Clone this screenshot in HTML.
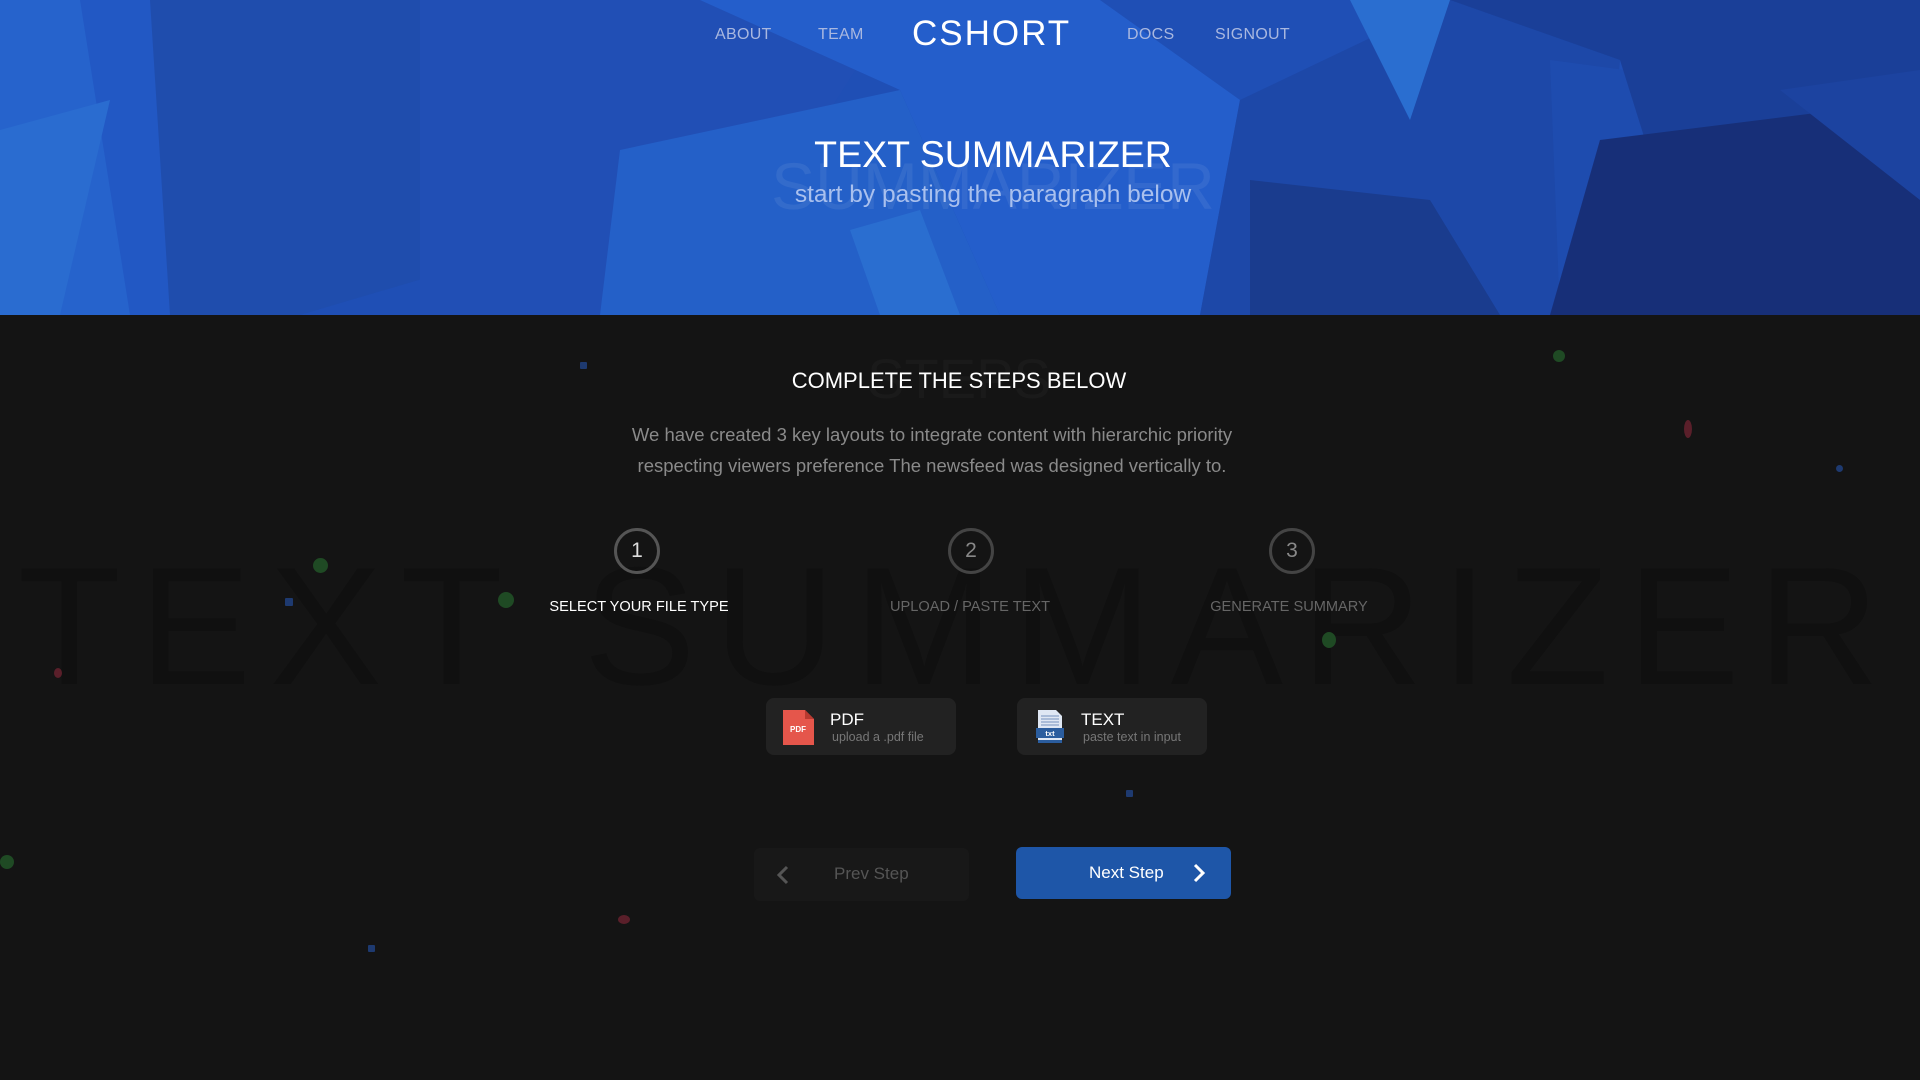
<!DOCTYPE html>
<html><head><meta charset="utf-8"><style>
*{margin:0;padding:0;box-sizing:border-box}
body{width:1920px;height:1080px;overflow:hidden;background:#141414;font-family:"Liberation Sans",sans-serif;position:relative}
.hdr{position:absolute;left:0;top:0;width:1920px;height:315px;overflow:hidden;background:#1f4fb5}
.abs{position:absolute;white-space:nowrap}
.nav{color:#a9b8e0;font-size:16px;top:26px;letter-spacing:.3px}
.c{transform:translateX(-50%);text-align:center}
.card{position:absolute;background:#222;border-radius:8px;width:190px;height:57px}
.card .t{position:absolute;left:64px;top:12px;color:#fff;font-size:17px}
.card .s{position:absolute;left:66px;top:32px;color:#777;font-size:12.5px}
.circ{position:absolute;width:46px;height:46px;border:3px solid #444;border-radius:50%;color:#888;font-size:21px;text-align:center;line-height:40px;transform:translate(-50%,-50%)}
.lbl{font-size:14.6px;color:#666;top:599px}
.dot{position:absolute;border-radius:50%}
</style></head><body>
<div class="hdr">
<svg width="1920" height="315" style="position:absolute;left:0;top:0">
<polygon points="0,0 420,0 300,315 0,315" fill="#2258c4"/>
<polygon points="0,0 80,0 130,315 0,315" fill="#2663cc"/>
<polygon points="0,130 110,100 60,315 0,315" fill="#2a6cd0"/>
<polygon points="150,0 420,0 520,250 300,315 170,315" fill="#1f4dad"/>
<polygon points="420,0 900,0 760,220 600,315 420,315" fill="#214fb5"/>
<polygon points="620,150 900,90 1000,315 600,315" fill="#2460c8"/>
<polygon points="850,230 920,210 960,315 880,315" fill="#2a6ed0"/>
<polygon points="700,0 1100,0 1240,100 1200,315 1000,315 900,90" fill="#245ecb"/>
<polygon points="1240,100 1450,0 1620,60 1600,315 1200,315" fill="#1d48a8"/>
<polygon points="1350,0 1450,0 1410,120" fill="#2a6ed0"/>
<polygon points="1550,60 1700,80 1740,315 1560,315" fill="#1e4caf"/>
<polygon points="1450,0 1920,0 1920,315 1700,315 1620,60" fill="#1a3f98"/>
<polygon points="1600,140 1920,100 1920,315 1550,315" fill="#172f78"/>
<polygon points="1780,90 1920,70 1920,200" fill="#1c43a0"/>
<polygon points="1250,180 1430,200 1500,315 1250,315" fill="#1a3c8e"/>
</svg>
<div class="abs nav" style="left:715px">ABOUT</div>
<div class="abs nav" style="left:818px">TEAM</div>
<div class="abs" style="left:912px;top:14px;color:#fff;font-size:35px;letter-spacing:2px">CSHORT</div>
<div class="abs nav" style="left:1127px">DOCS</div>
<div class="abs nav" style="left:1215px">SIGNOUT</div>
<div class="abs c" style="left:993px;top:148px;font-size:66px;color:rgba(255,255,255,.07)">SUMMARIZER</div>
<div class="abs c" style="left:993px;top:133px;font-size:37.5px;color:#fff">TEXT SUMMARIZER</div>
<div class="abs c" style="left:993px;top:181px;font-size:24.5px;color:#a9c0ee">start by pasting the paragraph below</div>
</div>
<div class="abs" style="left:18px;top:530px;font-size:168px;color:#101010;letter-spacing:18.5px">TEXT SUMMARIZER</div>
<div class="abs c" style="left:959px;top:346px;font-size:56px;color:#1a1a1a">STEPS</div>
<div class="abs c" style="left:959px;top:368px;font-size:22px;color:#fff">COMPLETE THE STEPS BELOW</div>
<div class="abs c" style="left:932px;top:419px;font-size:18.5px;color:#8a8a8a;line-height:31px">We have created 3 key layouts to integrate content with hierarchic priority<br>respecting viewers preference The newsfeed was designed vertically to.</div>
<div class="circ" style="left:637px;top:551px;color:#ddd;border-color:#555">1</div>
<div class="circ" style="left:971px;top:551px">2</div>
<div class="circ" style="left:1292px;top:551px">3</div>
<div class="abs c lbl" style="left:639px;color:#fff">SELECT YOUR FILE TYPE</div>
<div class="abs c lbl" style="left:970px">UPLOAD / PASTE TEXT</div>
<div class="abs c lbl" style="left:1289px">GENERATE SUMMARY</div>
<div class="card" style="left:766px;top:698px">
<svg style="position:absolute;left:17px;top:12px" width="31" height="35"><polygon points="0,0 22,0 31,9 31,35 0,35" fill="#e5564b"/><polygon points="22,0 31,9 22,9" fill="#b83a30"/><text x="15" y="22" font-size="8" font-weight="bold" fill="#fff" text-anchor="middle" font-family="Liberation Sans">PDF</text></svg>
<div class="t">PDF</div><div class="s">upload a .pdf file</div></div>
<div class="card" style="left:1017px;top:698px">
<svg style="position:absolute;left:19px;top:12px" width="28" height="35"><polygon points="2,0 20,0 26,6 26,33 2,33" fill="#dfe7f3"/><g stroke="#8aa3c8" stroke-width="1.3"><line x1="5" y1="6" x2="23" y2="6"/><line x1="5" y1="9" x2="23" y2="9"/><line x1="5" y1="12" x2="23" y2="12"/><line x1="5" y1="15" x2="23" y2="15"/></g><rect x="0" y="18" width="28" height="10" fill="#2b5d9e"/><text x="14" y="26" font-size="7.5" font-weight="bold" fill="#fff" text-anchor="middle" font-family="Liberation Sans">txt</text><rect x="2" y="30" width="24" height="3" fill="#2b5d9e"/></svg>
<div class="t">TEXT</div><div class="s">paste text in input</div></div>
<div class="abs" style="left:754px;top:848px;width:215px;height:53px;background:#181818;border-radius:6px">
<svg style="position:absolute;left:22px;top:17px" width="14" height="20"><polyline points="11,2 3,10 11,18" fill="none" stroke="#555" stroke-width="3"/></svg>
<div class="abs" style="left:80px;top:16px;color:#555;font-size:17px">Prev Step</div></div>
<div class="abs" style="left:1016px;top:847px;width:215px;height:52px;background:#1e56a8;border-radius:6px">
<svg style="position:absolute;left:176px;top:16px" width="14" height="20"><polyline points="3,2 11,10 3,18" fill="none" stroke="#fff" stroke-width="3"/></svg>
<div class="abs" style="left:73px;top:16px;color:#fff;font-size:17px">Next Step</div></div>
<div class="dot" style="left:1553px;top:350px;width:12px;height:12px;background:#1f4a24"></div>
<div class="dot" style="left:313px;top:558px;width:15px;height:15px;background:#1f4a24"></div>
<div class="dot" style="left:498px;top:592px;width:16px;height:16px;background:#1f4a24"></div>
<div class="dot" style="left:1322px;top:632px;width:14px;height:16px;background:#1f4a24"></div>
<div class="dot" style="left:0;top:855px;width:14px;height:14px;background:#1f4a24"></div>
<div class="dot" style="left:1684px;top:420px;width:8px;height:18px;background:#5a1f2a"></div>
<div class="dot" style="left:618px;top:915px;width:12px;height:9px;background:#5a1f2a"></div>
<div class="dot" style="left:54px;top:668px;width:8px;height:10px;background:#5a1f2a"></div>
<div class="dot" style="left:580px;top:362px;width:7px;height:7px;background:#1e3a70;border-radius:1px"></div>
<div class="dot" style="left:1836px;top:465px;width:7px;height:7px;background:#1e3a70"></div>
<div class="dot" style="left:285px;top:598px;width:8px;height:8px;background:#1e3a70;border-radius:1px"></div>
<div class="dot" style="left:1126px;top:790px;width:7px;height:7px;background:#1e3a70;border-radius:1px"></div>
<div class="dot" style="left:368px;top:945px;width:7px;height:7px;background:#1e3a70;border-radius:1px"></div>
</body></html>
